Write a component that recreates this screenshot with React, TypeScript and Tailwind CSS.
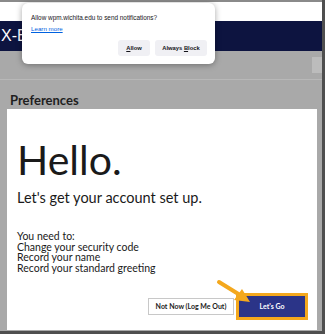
import React from 'react';

const sans = "[font-family:Lato,'Noto_Sans',sans-serif]";

function NotificationPrompt() {
  return (
    <div className="absolute left-[22px] top-[3px] h-[61px] w-[193px] rounded-[6px] bg-white shadow-[0_1px_6px_rgba(0,0,0,0.35)] [font-family:'Liberation_Sans',sans-serif]">
      <p className="absolute left-[9px] top-[11px] text-[6.4px] leading-[8px] text-[#15141a]">
        Allow wpm.wichita.edu to send notifications?
      </p>
      <a className="absolute left-[9px] top-[22px] text-[6.2px] leading-[8px] text-[#0061e0] underline">Learn more</a>
      <div className="absolute right-[8px] top-[37px] flex gap-[5px]">
        <button type="button" className="h-[16px] w-[32px] rounded-[3px] bg-[#f0f0f4] text-[5.8px] font-semibold text-[#15141a]">
          <span className="underline">A</span>llow
        </button>
        <button type="button" className="h-[16px] w-[52px] rounded-[3px] bg-[#f0f0f4] text-[5.8px] font-semibold text-[#15141a]">
          Always <span className="underline">B</span>lock
        </button>
      </div>
    </div>
  );
}

function Arrow() {
  return (
    <svg className="absolute left-[214px] top-[278px]" width="40" height="30" viewBox="0 0 40 30">
      <line x1="5" y1="4" x2="26" y2="17" stroke="#f4a81d" strokeWidth="4" strokeLinecap="round" />
      <polygon points="36,24 20,22 28,11" fill="#f4a81d" />
    </svg>
  );
}

export default function App() {
  return (
    <div className={`relative flex h-[334px] w-[325px] flex-col overflow-hidden border-r-[3px] border-b-[3px] border-[#4f4f4f] bg-[#a9a9a9] ${sans}`}>
      <div className="h-[2px] shrink-0 bg-[#8a8a8a]" />
      <div className="h-[19px] shrink-0 bg-white" />
      <div className="flex h-[30px] shrink-0 items-center bg-[#0d1440] pl-[1px]">
        <span className="text-[16px] leading-none text-white [font-family:'Liberation_Sans',sans-serif]">X-E</span>
      </div>
      <div className="flex h-[29px] shrink-0 items-start justify-end border-b border-[#b8b8b8] pt-[6px]">
        <div className="h-[16px] w-[10px] bg-[#bcbcbc]" />
      </div>
      <div className="flex flex-1 flex-col pl-[7px] pr-[5px]">
        <h2 className="mt-[12px] pl-[3px] text-[13px] font-bold leading-[16px] text-[#1f1f1f]">Preferences</h2>
        <div className="mt-[1px] flex h-[221px] flex-col bg-white pl-[10px] pr-[9px] text-[#1a1a1a]">
          <h1 className="mt-[32px] text-[41px] font-normal leading-[38px]">Hello.</h1>
          <p className="mt-[10px] text-[14.5px] leading-[18px]">Let's get your account set up.</p>
          <div className="mt-[24px] text-[10.5px] leading-[10.6px]">
            <p>You need to:</p>
            <p>Change your security code</p>
            <p>Record your name</p>
            <p>Record your standard greeting</p>
          </div>
          <div className="mt-auto mb-[10px] flex items-center justify-end gap-[2px]">
            <button type="button" className="h-[17px] w-[86px] border border-[#c8c8c8] bg-white text-[7px] font-bold text-[#222]">
              Not Now (Log Me Out)
            </button>
            <div className="border-[3px] border-[#f4a81d]">
              <button type="button" className="block h-[21px] w-[66px] bg-[#2b3488] text-[7px] font-bold text-white">
                Let's Go
              </button>
            </div>
          </div>
        </div>
      </div>
      <NotificationPrompt />
      <Arrow />
    </div>
  );
}
